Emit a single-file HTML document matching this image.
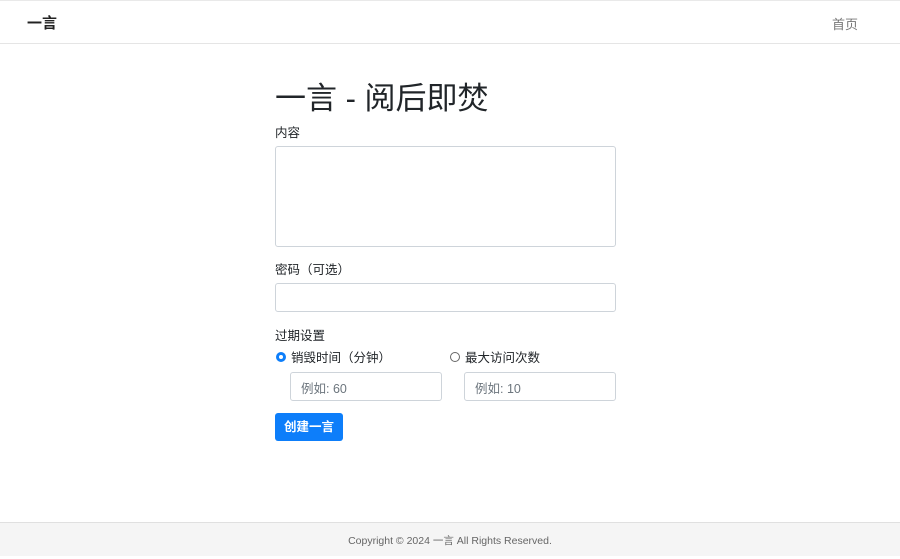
<!DOCTYPE html>
<html><head><meta charset="utf-8"><style>
*{box-sizing:border-box}
body{margin:0;width:900px;height:556px;font-family:"Liberation Sans","Noto Sans CJK SC",sans-serif;color:#212529;background:#fff;position:relative;font-size:13px}
.nav{position:absolute;top:0;left:0;width:900px;height:44px;border-top:1px solid #e9e9e9;border-bottom:1px solid #e5e5e5}
.brand{position:absolute;left:27px;top:11px;font-size:15px;color:#222;font-weight:bold}
.home{position:absolute;right:42px;top:13px;font-size:13px;color:#777}
h1{position:absolute;left:275px;top:80px;margin:0;font-size:31px;font-weight:normal;line-height:38px}
.lbl{position:absolute;left:275px;font-size:12.5px}
.box{position:absolute;border:1px solid #ced4da;border-radius:3px;background:#fff}
.ph{color:#6c757d;font-size:12.5px;padding:5px 10px}
.radio{position:absolute;width:10px;height:10px;border-radius:50%;border:1px solid #666}
.btn{position:absolute;left:275px;top:413px;width:68px;height:28px;background:#0d7efa;border-radius:3px;color:#fff;font-size:12.5px;text-align:center;line-height:28px;font-weight:bold}
.foot{position:absolute;left:0;top:522px;width:900px;height:34px;background:#f5f5f5;border-top:1px solid #e0e0e0;text-align:center;line-height:36px;color:#666;font-size:10.5px}
</style></head><body>
<div class="nav"><div class="brand">一言</div><div class="home">首页</div></div>
<h1>一言 - 阅后即焚</h1>
<div class="lbl" style="top:122px">内容</div>
<div class="box" style="left:275px;top:146px;width:341px;height:101px"></div>
<div class="lbl" style="top:259px">密码（可选）</div>
<div class="box" style="left:275px;top:283px;width:341px;height:29px"></div>
<div class="lbl" style="top:325px">过期设置</div>
<div class="radio" style="left:276px;top:352px;border:3px solid #0d7efa"></div>
<div class="lbl" style="left:291px;top:347px">销毁时间（分钟）</div>
<div class="radio" style="left:450px;top:352px"></div>
<div class="lbl" style="left:465px;top:347px">最大访问次数</div>
<div class="box ph" style="left:290px;top:372px;width:152px;height:29px">例如: 60</div>
<div class="box ph" style="left:464px;top:372px;width:152px;height:29px">例如: 10</div>
<div class="btn">创建一言</div>
<div class="foot">Copyright © 2024 一言 All Rights Reserved.</div>
</body></html>
